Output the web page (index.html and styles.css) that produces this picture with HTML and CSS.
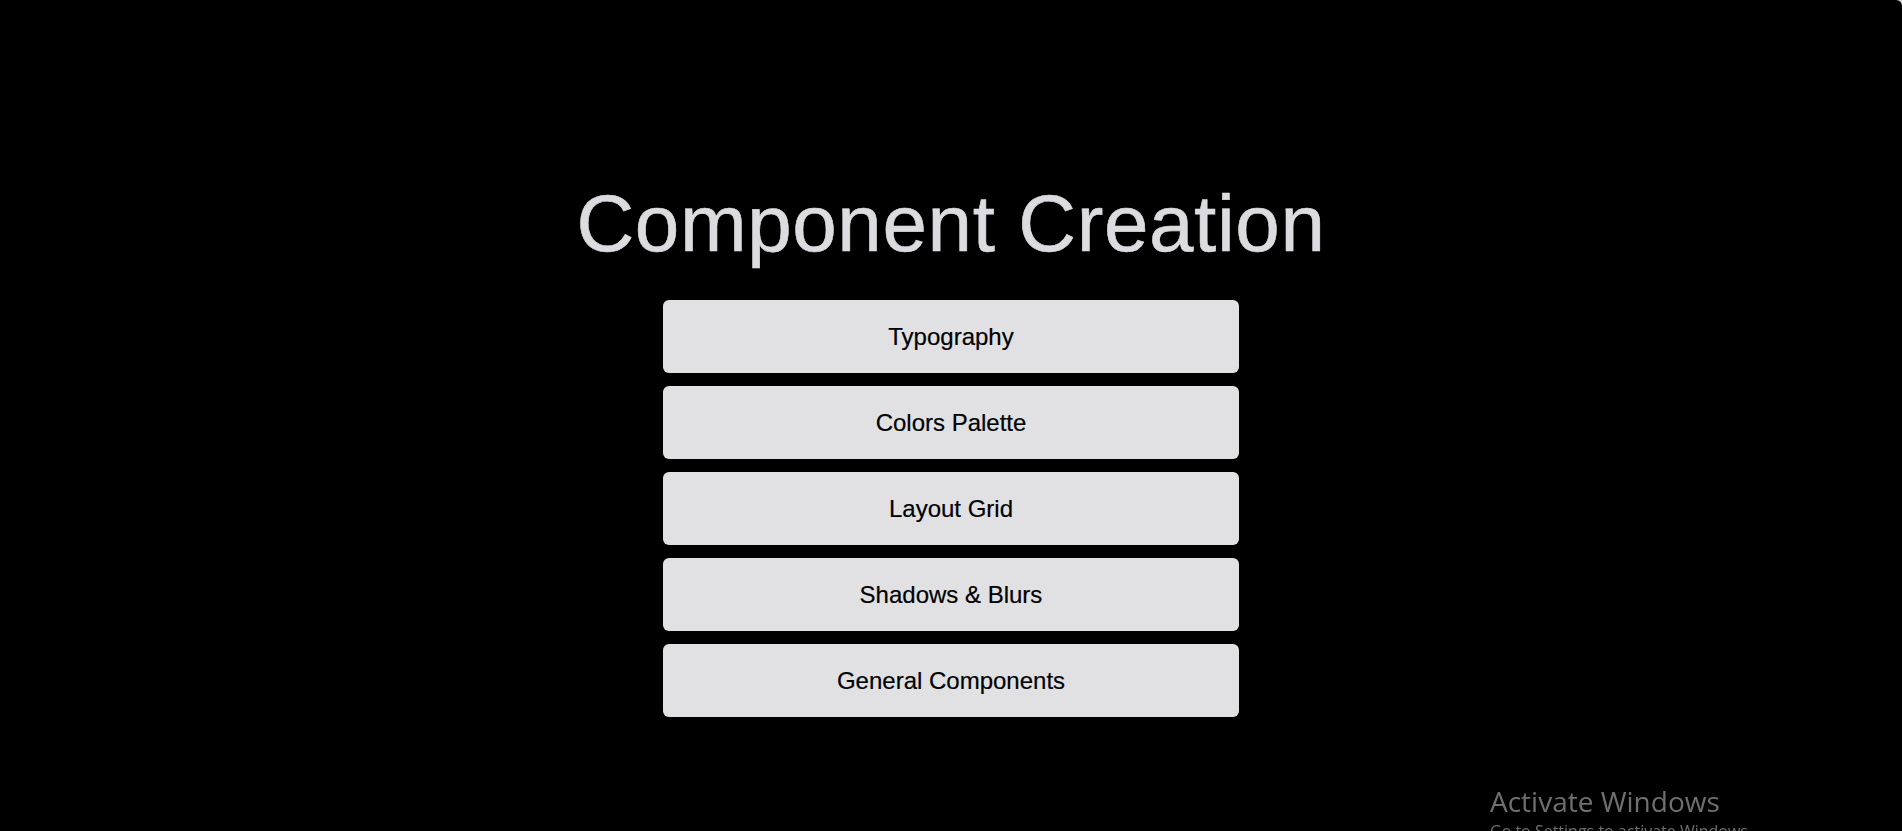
FILE: index.html
```html
<!DOCTYPE html>
<html lang="en">

<head>
  <meta charset="UTF-8" />
  <meta name="viewport" content="width=device-width, initial-scale=1.0" />
  <title>Component Creation</title>
  <link rel="stylesheet" href="styles.css">
</head>

<body>
  <section class="container">
    <h1 class="title">Component Creation</h1>
    <nav class="menu">
      <a href="#" class="menu-item">Typography</a>
      <a href="#" class="menu-item">Colors Palette</a>
      <a href="#" class="menu-item">Layout Grid</a>
      <a href="#" class="menu-item">Shadows &amp; Blurs</a>
      <a href="#" class="menu-item">General Components</a>
    </nav>
  </section>

  <div class="watermark">
    <p class="watermark-title">Activate Windows</p>
    <p class="watermark-sub">Go to Settings to activate Windows.</p>
  </div>
</body>

</html>
```

FILE: styles.css
```css
:root {
  --background: #000000;
  --title: #dcdce0;
  --button: #e1e1e3;
  --button-text: #000000;
}

* {
  box-sizing: border-box;
}

html {
  background: #cfcfcf;
}

body {
  margin: 0;
  min-height: 100vh;
  overflow: hidden;
  font-family: "Liberation Sans", Arial, sans-serif;
  background: var(--background);
  border-top-right-radius: 6px;
}

a {
  text-decoration: none;
  color: var(--button-text);
}

.container {
  display: flex;
  flex-direction: column;
  align-items: center;
  padding-top: 184px;
}

.title {
  margin: 0 0 36px;
  font-size: 80px;
  line-height: 80px;
  font-weight: 400;
  letter-spacing: 0.6px;
  color: var(--title);
  -webkit-text-stroke: 0.6px var(--title);
}

.menu {
  display: flex;
  flex-direction: column;
  gap: 13px;
  width: 576px;
}

.menu-item {
  display: flex;
  justify-content: center;
  align-items: center;
  height: 73px;
  background: var(--button);
  border-radius: 6px;
  font-size: 24px;
  -webkit-text-stroke: 0.2px var(--button-text);
}

.watermark {
  position: fixed;
  left: 1490px;
  top: 782px;
  color: #6f6f6f;
  font-family: "Open Sans", sans-serif;
  pointer-events: none;
}

.watermark p {
  margin: 0;
}

.watermark-title {
  font-size: 28px;
  line-height: 38px;
}

.watermark-sub {
  font-size: 16px;
  line-height: 22px;
}
```
